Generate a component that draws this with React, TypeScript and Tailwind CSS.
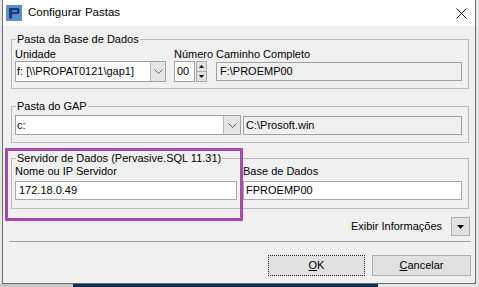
import React from "react";

const Group = ({ title, className, children }: { title: string; className?: string; children: React.ReactNode }) => (
  <fieldset className={`ml-[8px] mr-[6px] border border-[#b9b9b9] ${className ?? ""}`}>
    <legend className="ml-[4px] px-[1px] leading-[14px]">{title}</legend>
    {children}
  </fieldset>
);

const Chevron = () => (
  <svg width="9" height="5" viewBox="0 0 9 5">
    <polyline points="0.5,0.5 4.5,4.5 8.5,0.5" fill="none" stroke="#606060" strokeWidth="1" />
  </svg>
);

const Label = ({ children }: { children: React.ReactNode }) => (
  <div className="h-[13px] leading-[13px] whitespace-nowrap">{children}</div>
);

const App = () => {
  return (
    <div className="w-[479px] h-[287px] bg-[#e4e6e9] overflow-hidden relative font-['Liberation_Sans',Arial,sans-serif] text-[11px] text-black">
      <div className="ml-[2px] w-[474px] h-[284px] border-x border-b border-[#6e6e6e] bg-[#f0f0f0] flex flex-col">
        {/* title bar */}
        <div className="h-[26px] bg-white flex items-center pl-[3px] pr-[8px]">
          <svg width="16" height="16" viewBox="0 0 16 16">
            <rect width="16" height="16" fill="#5c8fcc" />
            <path d="M3 3h9a1.5 1.5 0 0 1 1.5 1.5v3A1.5 1.5 0 0 1 12 9H6.2v4.5H3zM6.2 5.3v1.6h4.6V5.3z" fill="#1c3d73" fillRule="evenodd" />
          </svg>
          <span className="ml-[6px] text-[11.5px]">Configurar Pastas</span>
          <svg className="ml-auto" width="11" height="11" viewBox="0 0 11 11">
            <path d="M0.5 0.5L10.5 10.5M10.5 0.5L0.5 10.5" stroke="#111" strokeWidth="1" />
          </svg>
        </div>

        {/* Pasta da Base de Dados */}
        <Group title="Pasta da Base de Dados" className="mt-[6px]">
          <div className="flex pl-[3px] pr-[6px] pt-[2px] pb-[6px]">
            <div className="w-[151px] flex flex-col">
              <Label>Unidade</Label>
              <div className="h-[21px] border border-[#a0a0a0] bg-white flex">
                <div className="flex-1 pl-[1px] flex items-center whitespace-nowrap">f: [\\PROPAT0121\gap1]</div>
                <div className="w-[15px] bg-[#e5e5e5] border-l border-[#b5b5b5] flex items-center justify-center">
                  <Chevron />
                </div>
              </div>
            </div>
            <div className="ml-[8px] w-[42px] flex flex-col">
              <Label>Número</Label>
              <div className="h-[21px] flex">
                <div className="w-[21px] border border-[#a0a0a0] bg-white pl-[2px] flex items-center">00</div>
                <div className="ml-[1px] w-[11px] flex flex-col">
                  <div className="flex-1 border border-[#adadad] bg-[#e1e1e1] flex items-center justify-center">
                    <svg width="5" height="3" viewBox="0 0 5 3"><path d="M2.5 0L5 3H0z" fill="#000" /></svg>
                  </div>
                  <div className="flex-1 border border-t-0 border-[#adadad] bg-[#e1e1e1] flex items-center justify-center">
                    <svg width="5" height="3" viewBox="0 0 5 3"><path d="M0 0h5L2.5 3z" fill="#000" /></svg>
                  </div>
                </div>
              </div>
            </div>
            <div className="flex-1 flex flex-col">
              <Label>Caminho Completo</Label>
              <div className="h-[21px] flex items-center">
                <div className="w-full h-[19px] border border-[#a0a0a0] bg-[#f0f0f0] pl-[3px] flex items-center">F:\PROEMP00</div>
              </div>
            </div>
          </div>
        </Group>

        {/* Pasta do GAP */}
        <Group title="Pasta do GAP" className="mt-[10px]">
          <div className="flex items-center pl-[3px] pr-[6px] pt-[2px] pb-[7px]">
            <div className="w-[226px] h-[20px] border border-[#a0a0a0] bg-white flex">
              <div className="flex-1 pl-[1px] flex items-center">c:</div>
              <div className="w-[17px] bg-[#e5e5e5] border-l border-[#b5b5b5] flex items-center justify-center">
                <Chevron />
              </div>
            </div>
            <div className="ml-[2px] flex-1 h-[19px] border border-[#a0a0a0] bg-[#f0f0f0] pl-[2px] flex items-center">C:\Prosoft.win</div>
          </div>
        </Group>

        {/* Servidor de Dados */}
        <Group title="Servidor de Dados (Pervasive.SQL 11.31)" className="mt-[8px]">
          <div className="flex pl-[3px] pr-[6px] pb-[8px]">
            <div className="w-[222px] flex flex-col">
              <Label>Nome ou IP Servidor</Label>
              <div className="mt-[3px] h-[19px] border border-[#a9a9a9] bg-white pl-[3px] flex items-center">172.18.0.49</div>
            </div>
            <div className="ml-[6px] flex-1 flex flex-col">
              <Label>Base de Dados</Label>
              <div className="mt-[3px] h-[19px] border border-[#a9a9a9] bg-white pl-[2px] flex items-center">FPROEMP00</div>
            </div>
          </div>
        </Group>

        {/* Exibir Informações */}
        <div className="mt-[8px] mr-[5px] flex justify-end items-center">
          <span className="mr-[9px]">Exibir Informações</span>
          <div className="w-[19px] h-[19px] border border-[#adadad] bg-[#e1e1e1] flex items-center justify-center">
            <svg width="7" height="4" viewBox="0 0 7 4"><path d="M0 0h7L3.5 4z" fill="#000" /></svg>
          </div>
        </div>

        <div className="mt-[5px] ml-[7px] mr-[5px] h-px bg-[#a0a0a0]" />

        {/* buttons */}
        <div className="mt-[13px] mr-[4px] flex justify-end gap-[7px]">
          <button className="w-[97px] h-[21px] border border-dotted border-[#222] bg-[#e1e1e1] flex items-center justify-center">
            <span><span className="underline">O</span>K</span>
          </button>
          <button className="w-[99px] h-[21px] border border-[#adadad] bg-[#e1e1e1] flex items-center justify-center">
            <span><span className="underline">C</span>ancelar</span>
          </button>
        </div>
      </div>

      <div className="flex h-[3px]">
        <div className="w-[73px] bg-[#c6c6c6]" />
        <div className="w-[305px] bg-[#0f2d52]" />
      </div>

      {/* highlight annotation */}
      <div className="absolute left-[5px] top-[148px] w-[238px] h-[73px] border-[3px] border-[#a64ca8]" />
    </div>
  );
};

export default App;
